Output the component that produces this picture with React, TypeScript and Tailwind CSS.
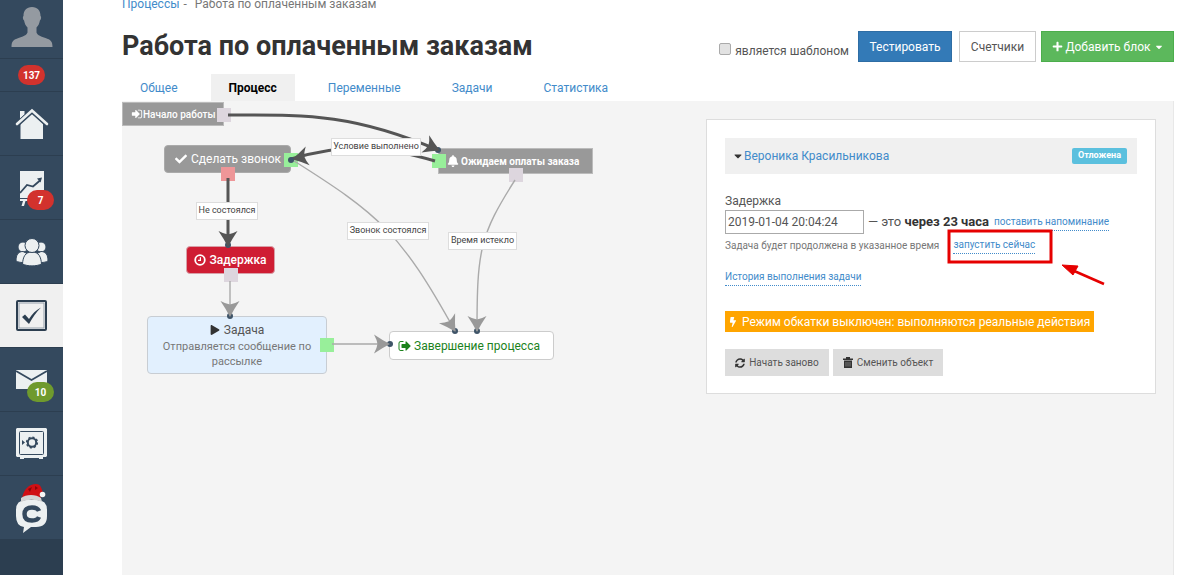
import type { ReactNode } from "react";
import { FaBell, FaBolt, FaCaretDown, FaCheck, FaPlay, FaPlus, FaSyncAlt } from "react-icons/fa";

const SignInIcon = () => (
  <svg viewBox="0 0 1792 1792" className="size-3 shrink-0" fill="currentColor">
    <path d="M1312 896q0 26-19 45l-544 544q-19 19-45 19t-45-19-19-45v-288H192q-26 0-45-19t-19-45V704q0-26 19-45t45-19h448V352q0-26 19-45t45-19 45 19l544 544q19 19 19 45zm352-352v704q0 119-84.5 203.5T1376 1536h-320q-13 0-22.5-9.5T1024 1504q0-4-1-20t-.5-26.5 3-23.5 10-19.5 20.5-6.5h320q66 0 113-47t47-113V544q0-66-47-113t-113-47h-312l-11.5-1-11.5-3-8-5.5-7-9-2-13.5q0-4-1-20t-.5-26.5 3-23.5 10-19.5 20.5-6.5h320q119 0 203.5 84.5T1664 544z" />
  </svg>
);

const SignOutIcon = () => (
  <svg viewBox="0 0 1792 1792" className="size-3.5 shrink-0" fill="currentColor">
    <path d="M704 1440q0 4 1 20t.5 26.5-3 23.5-10 19.5-20.5 6.5H352q-119 0-203.5-84.5T64 1248V544q0-119 84.5-203.5T352 256h320q13 0 22.5 9.5T704 288q0 4 1 20t.5 26.5-3 23.5-10 19.5T672 384H352q-66 0-113 47t-47 113v704q0 66 47 113t113 47h312l11.5 1 11.5 3 8 5.5 7 9 2 13.5zm928-544q0 26-19 45l-544 544q-19 19-45 19t-45-19-19-45v-288H512q-26 0-45-19t-19-45V704q0-26 19-45t45-19h448V352q0-26 19-45t45-19 45 19l544 544q19 19 19 45z" />
  </svg>
);

const ClockIcon = () => (
  <svg viewBox="0 0 12 12" className="size-3 shrink-0" fill="none" stroke="currentColor">
    <circle cx="6" cy="6" r="4.8" strokeWidth="1.8" />
    <path d="M6.4 3.2v3.2H4" strokeWidth="1.2" />
  </svg>
);

const TrashIcon = () => (
  <svg viewBox="0 0 10 11" className="h-[11px] w-2.5 shrink-0" fill="#333">
    <path d="M3 0h4v1.500h3V3H0V1.500h3z" />
    <path d="M1 3.500h8V11H1z" />
    <path d="M3 5v4.500M5 5v4.500M7 5v4.500" stroke="#999" strokeWidth=".7" />
  </svg>
);

const AvatarIcon = () => (
  <svg viewBox="0 0 42 41" className="h-[41px] w-[42px]" fill="#949aa1">
    <path d="M21 1c5.500 0 8.500 3.500 8.500 9 1 .6.800 3.500-.6 4.500-.5 3-1.500 5-3.400 7v5c1 3 5 4 9 5.500 5 1.800 7 3 7 9H.5c0-6 2-7.200 7-9 4-1.500 8-2.500 9-5.500v-5c-1.900-2-2.900-4-3.400-7-1.400-1-1.600-3.900-.6-4.500C12.500 4.500 15.500 1 21 1z" />
  </svg>
);

const HomeIcon = () => (
  <svg viewBox="0 0 34 32" className="h-8 w-[34px]" fill="#ecf0f1">
    <path d="M5 3h4.500v3.500L5 11z" />
    <path d="M5.500 15.500 17 5l11 10.500V31h-22.500z" />
    <path d="M2 16.500 17 3l15 13.500" fill="none" stroke="#34495e" strokeWidth="5" />
    <path d="M2 16 17 2.500 32 16" fill="none" stroke="#ecf0f1" strokeWidth="2.600" strokeLinecap="round" />
  </svg>
);

const ChartIcon = () => (
  <svg viewBox="0 0 26 36" className="h-9 w-[26px]" fill="#ecf0f1">
    <path d="M1 1h24v27H1z" />
    <path d="M1 23 8 15l6 1.500 7-6" fill="none" stroke="#34495e" strokeWidth="1.800" />
    <path d="m18 8.500 5-1-1.500 5z" fill="#34495e" />
    <path d="M1 29h12v2H1zM4 31h2.500L5 36H2.500z" />
  </svg>
);

const PeopleIcon = () => (
  <svg viewBox="0 0 32 28" className="h-7 w-8" fill="#ecf0f1" stroke="#34495e" strokeWidth="1">
    <circle cx="7" cy="9" r="5" />
    <circle cx="25" cy="9" r="5" />
    <path d="M0 23c0-6 2-9.500 7-9.500l4 2-4 9c-3 0-5-.5-7-1.500zM32 23c0-6-2-9.500-7-9.500l-4 2 4 9c3 0 5-.5 7-1.500z" />
    <path d="M6.500 26c.5-7 2.500-12 9.500-12s9 5 9.500 12c-5 2.500-14 2.500-19 0z" />
    <circle cx="16" cy="7.500" r="7" />
  </svg>
);

const TaskIcon = () => (
  <svg viewBox="0 0 31 31" className="size-[31px]" fill="none">
    <rect x="1" y="1" width="29" height="29" rx="1" stroke="#2c3e50" strokeWidth="2" />
    <rect x="3" y="3" width="25" height="25" stroke="#95a0ab" strokeWidth="1" />
    <path d="m6 17 3-2.500 4 4.500C16 14 20 10 25 7.500 20 12.500 16.500 17.500 13 24z" fill="#2c3e50" />
  </svg>
);

const MailIcon = () => (
  <svg viewBox="0 0 31 19" className="h-[19px] w-[31px]">
    <path d="M0 0h31v19H0z" fill="#ecf0f1" />
    <path d="m0 1 15.500 9L31 1" fill="none" stroke="#34495e" strokeWidth="1.800" />
  </svg>
);

const SafeIcon = () => (
  <svg viewBox="0 0 31 31" className="size-[31px]" fill="none">
    <path d="M1 0h29l1 1v27l-1 1h-3v2h-4v-1H8v1H4v-2H1l-1-1V1z" fill="#ecf0f1" />
    <rect x="3.500" y="3.500" width="24" height="23" rx="1" stroke="#34495e" />
    <circle cx="16" cy="14.500" r="4.200" stroke="#34495e" strokeWidth="2" />
    <circle cx="16" cy="14.500" r="5.400" stroke="#34495e" strokeWidth="1.400" strokeDasharray="2.200 2" />
    <path d="m6 12 3 2.500L6 17z" fill="#34495e" />
  </svg>
);

const SantaChatIcon = () => (
  <svg viewBox="0 0 31 50" className="h-[50px] w-[31px]">
    <path d="M10 17h11q10 0 10 10v6q0 11-11 11h-5l-8 6 1-6Q0 43 0 33v-6q0-10 10-10z" fill="#ecf0f1" />
    <path d="M23 28c-1-2.500-3.500-3.500-7-3.500-4.500 0-7.500 2-7.500 6.500s3 6.500 7.500 6.500c3.500 0 6-1 7-3.500" fill="none" stroke="#34495e" strokeWidth="4.400" />
    <path d="M6 15C8 6 13 1 20 1c5 0 6 5 7 10l-3-1 1 7z" fill="#d00f14" />
    <path d="m12 6 4-2-2 5zm7-3 3 2-3 2z" fill="#8d0609" />
    <path d="M5 15c5-4 15-4 20 0l1 4c-6-3-15-3-21 0z" fill="#d4d4d4" />
    <circle cx="26.500" cy="11.500" r="2.800" fill="#f5f5f5" />
  </svg>
);

const menu: { name: string; icon: ReactNode; badge?: string; color?: string; active?: boolean }[] = [
  { name: "Главная", icon: <HomeIcon /> },
  { name: "Отчеты", icon: <ChartIcon />, badge: "7", color: "bg-[#d2322d]" },
  { name: "Клиенты", icon: <PeopleIcon /> },
  { name: "Процессы", icon: <TaskIcon />, active: true },
  { name: "Почта", icon: <MailIcon />, badge: "10", color: "bg-[#6f9a2d]" },
  { name: "Финансы", icon: <SafeIcon /> },
  { name: "Чат", icon: <SantaChatIcon /> },
];

const Sidebar = () => (
  <nav className="w-[63px] shrink-0 bg-[#2c3e50] text-white">
    <a href="#profile" aria-label="Профиль" className="flex h-[59px] justify-center border-b border-[#2c3e50] bg-[#34495e] pt-1.5">
      <AvatarIcon />
    </a>
    <a href="#notices" className="flex h-[33px] items-center justify-center border-b border-[#2c3e50] bg-[#34495e]">
      <span className="flex h-5 w-[27px] items-center justify-center rounded-full bg-[#d2322d] text-[10px] font-bold">137</span>
    </a>
    {menu.map((item) => (
      <a
        key={item.name}
        href="#menu"
        aria-label={item.name}
        className={`relative flex h-16 items-center justify-center border-b border-[#2c3e50] ${item.active ? "bg-[#f0f0f0]" : "bg-[#34495e]"}`}
      >
        {item.icon}
        {item.badge && (
          <span className={`absolute right-[9px] bottom-[9px] flex h-5 w-[27px] items-center justify-center rounded-full text-[10px] font-bold ${item.color}`}>
            {item.badge}
          </span>
        )}
      </a>
    ))}
  </nav>
);

const tabs = ["Общее", "Процесс", "Переменные", "Задачи", "Статистика"];

const Header = () => (
  <header>
    <div className="-mt-1.5 flex h-5 items-center gap-1 text-[12px] text-[#777]">
      <a href="#list" className="text-[#428bca]">Процессы</a>
      <span className="mr-1">-</span>
      <span>Работа по оплаченным заказам</span>
    </div>
    <div className="mt-[17px] flex h-8 items-start justify-between">
      <h1 className="text-[27px] leading-[30px] font-bold text-[#333]">Работа по оплаченным заказам</h1>
      <div className="flex items-start">
        <label className="mt-3 mr-[9px] flex items-center gap-1 text-[12px] leading-4 text-[#555]">
          <input type="checkbox" className="mb-1 size-3 appearance-none rounded-xs border border-[#aaa] bg-[#e2e2e2]" />
          является шаблоном
        </label>
        <button className="mr-[7px] h-[31px] w-[94px] border border-[#2e6da4] bg-[#337ab7] text-[12px] text-white">Тестировать</button>
        <button className="mr-[5px] h-[31px] w-[77px] border border-[#ccc] bg-white text-[12px] text-[#555]">Счетчики</button>
        <button className="flex h-[31px] w-[133px] items-center justify-center gap-[3px] border border-[#4cae4c] bg-[#5cb85c] text-[12px] text-white">
          <FaPlus className="size-[11px]" />
          Добавить блок
          <FaCaretDown className="size-2.5" />
        </button>
      </div>
    </div>
    <nav className="mt-[11px] flex gap-[15px] text-[12px]">
      {tabs.map((tab) => (
        <a
          key={tab}
          href="#tab"
          className={`flex h-[27px] items-center px-[18px] ${tab === "Процесс" ? "bg-[#f0f0f0] font-bold text-black" : "text-[#428bca]"}`}
        >
          {tab}
        </a>
      ))}
    </nav>
  </header>
);

const edges = [
  { d: "M106 14C178 14 228 11 316 49", tip: "translate(317 49) rotate(24)", bold: true },
  { d: "M313 60C258 44 223 42 169 58", tip: "translate(171 58) rotate(168)", bold: true },
  { d: "M106 77V143", tip: "translate(106 145) rotate(90)", bold: true },
  { d: "M169 58C258 114 278 131 333 230", tip: "translate(333 230) rotate(58)" },
  { d: "M393 79C358 134 355 149 355 230", tip: "translate(355 230) rotate(90)" },
  { d: "M108 180V214", tip: "translate(108 215) rotate(90)" },
  { d: "M210 243H266", tip: "translate(267 243)" },
];

const dots = [[316, 49], [106, 144], [333, 230], [355, 230], [108, 215], [268, 243]];

const ports = [
  "left-[95px] top-[7px] bg-[#ddd6de]",
  "left-[162px] top-[52px] bg-[#98ef9a]",
  "left-[99px] top-[66px] bg-[#ee9698]",
  "left-[310px] top-[53px] bg-[#98ef9a]",
  "left-[387px] top-[67px] bg-[#ddd6de]",
  "left-[102px] top-[167px] bg-[#ddd6de]",
  "left-[198px] top-[237px] bg-[#98ef9a]",
];

const labels = [
  { text: "Условие выполнено", place: "left-[209px] top-[37px] w-[90px]" },
  { text: "Не состоялся", place: "left-[74px] top-[101px] w-[62px]" },
  { text: "Звонок состоялся", place: "left-[225px] top-[121px] w-[82px]" },
  { text: "Время истекло", place: "left-[326px] top-[131px] w-[69px]" },
];

const node = "absolute flex items-center border whitespace-nowrap";

const Diagram = () => (
  <div className="relative h-[300px] w-[480px] shrink-0">
    <div className={`${node} top-[1px] left-0 h-6 w-[102px] border-[#bbb] bg-[#999] pl-2 text-[10px] font-medium text-white`}>
      <SignInIcon />
      Начало работы
    </div>
    <div className={`${node} top-11 left-[42px] h-7 w-[127px] gap-1 rounded border-[#aaa] bg-[#999] pl-2.5 text-[12px] text-white`}>
      <FaCheck className="size-3" />
      Сделать звонок
    </div>
    <div className={`${node} top-[47px] left-[316px] h-[26px] w-[155px] gap-0.5 border-[#bbb] bg-[#999] pl-2 text-[10px] font-bold text-white`}>
      <FaBell className="size-3" />
      Ожидаем оплаты заказа
    </div>
    <div className={`${node} top-[145px] left-16 h-7 w-[89px] justify-center gap-[3px] rounded border-[#d8a0a8] bg-[#cf1d33] text-[12px] font-medium text-white`}>
      <ClockIcon />
      Задержка
    </div>
    <div className="absolute top-[215px] left-[25px] h-[58px] w-[180px] rounded border border-[#c8cdd3] bg-[#e2f0fe] px-3 pt-1 text-center text-[11px] leading-[15px] text-[#777]">
      <div className="flex items-center justify-center gap-1 text-[12px] leading-[18px] text-[#555]">
        <FaPlay className="size-2.5 text-[#333]" />
        Задача
      </div>
      Отправляется сообщение по рассылке
    </div>
    <div className={`${node} top-[230px] left-[267px] h-[29px] w-[165px] gap-0.5 rounded border-[#ccc] bg-white pl-2 text-[12px] text-[#1c821c]`}>
      <SignOutIcon />
      Завершение процесса
    </div>
    {ports.map((port) => (
      <span key={port} className={`absolute size-3.5 ${port}`} />
    ))}
    <svg viewBox="0 0 480 300" className="absolute inset-0 h-[300px] w-[480px]" fill="none">
      {dots.map(([x, y]) => (
        <circle key={`${x}-${y}`} cx={x} cy={y} r="3" fill="#3f5468" />
      ))}
      {edges.map((edge) => (
        <g key={edge.d}>
          <path d={edge.d} stroke={edge.bold ? "#555" : "#aaa"} strokeWidth={edge.bold ? 3 : 1.4} />
          <path d="M1 0Q-7-4-15-9.500Q-12-4-11.500 0Q-12 4-15 9.500Q-7 4 1 0z" transform={edge.tip} fill={edge.bold ? "#555" : "#999"} />
        </g>
      ))}
      <circle cx="169" cy="59" r="3" fill="#3f5468" />
    </svg>
    {labels.map((label) => (
      <span
        key={label.text}
        className={`absolute flex h-[18px] items-center justify-center border border-[#ddd] bg-white text-[9px] whitespace-nowrap text-[#444] ${label.place}`}
      >
        {label.text}
      </span>
    ))}
  </div>
);

const TaskCard = () => (
  <section className="mt-[18px] mr-[17px] h-[275px] w-[450px] shrink-0 border border-[#ddd] bg-white p-[18px] text-[#555]">
    <div className="flex h-9 items-center bg-[#f0f0f0] pr-2.5 pl-[7px]">
      <FaCaretDown className="size-3 text-[#333]" />
      <a href="#client" className="text-[12px] text-[#428bca]">Вероника Красильникова</a>
      <span className="ml-auto flex h-4 items-center rounded-xs bg-[#5bc0de] px-1.5 text-[9px] font-bold text-white">Отложена</span>
    </div>
    <label htmlFor="delay" className="mt-[18px] block text-[12px] leading-[18px]">Задержка</label>
    <div className="flex h-6 items-center gap-1 text-[13px] whitespace-nowrap">
      <input id="delay" defaultValue="2019-01-04 20:04:24" className="h-6 w-[139px] border border-[#aaa] px-0.5 text-[12px]" />
      <span>
        — это <b className="text-[#333]">через 23 часа</b>
      </span>
      <a href="#remind" className="ml-px border-b border-dotted border-[#428bca] text-[10px] leading-4 text-[#428bca]">поставить напоминание</a>
    </div>
    <div className="mt-0.5 flex h-[18px] items-center gap-3.5 text-[10px] whitespace-nowrap text-[#777]">
      Задача будет продолжена в указанное время
      <span className="relative text-[#428bca]">
        <a href="#run" className="block border-b border-dotted border-[#428bca] leading-4">запустить сейчас</a>
        <svg viewBox="0 0 160 60" className="pointer-events-none absolute -top-2 -left-1.5 h-[60px] w-[160px]" fill="none" stroke="#e60000">
          <rect x="2" y="2" width="102" height="31" strokeWidth="3" />
          <path d="m157 55-32-14" strokeWidth="2.500" />
          <path d="m115 36 16 1-5 9z" fill="#e60000" strokeWidth="1" />
        </svg>
      </span>
    </div>
    <div className="mt-[15px] flex">
      <a href="#history" className="border-b border-dotted border-[#428bca] text-[10px] leading-4 text-[#428bca]">История выполнения задачи</a>
    </div>
    <div className="mt-[25px] flex">
      <span className="flex h-[21px] items-center gap-1 bg-[#ffa500] pr-1 pl-[3px] text-[12px] whitespace-nowrap text-white">
        <FaBolt className="size-2.5" />
        Режим обкатки выключен: выполняются реальные действия
      </span>
    </div>
    <div className="mt-[17px] flex gap-1 text-[10px]">
      <button className="flex h-[27px] w-[104px] items-center justify-center gap-1 bg-[#ddd]">
        <FaSyncAlt className="size-2.5 text-[#333]" />
        Начать заново
      </button>
      <button className="flex h-[27px] w-[110px] items-center justify-center gap-1 bg-[#ddd]">
        <TrashIcon />
        Сменить объект
      </button>
    </div>
  </section>
);

const App = () => {
  return (
    <div className="flex h-screen overflow-hidden bg-white pb-[5px] font-['Roboto',sans-serif]">
      <Sidebar />
      <main className="flex min-w-0 flex-1 flex-col pr-3.5 pl-[59px]">
        <Header />
        <div className="flex flex-1 justify-between border-r border-[#e8e8e8] bg-[#f4f4f4]">
          <Diagram />
          <TaskCard />
        </div>
      </main>
    </div>
  );
};

export default App;
